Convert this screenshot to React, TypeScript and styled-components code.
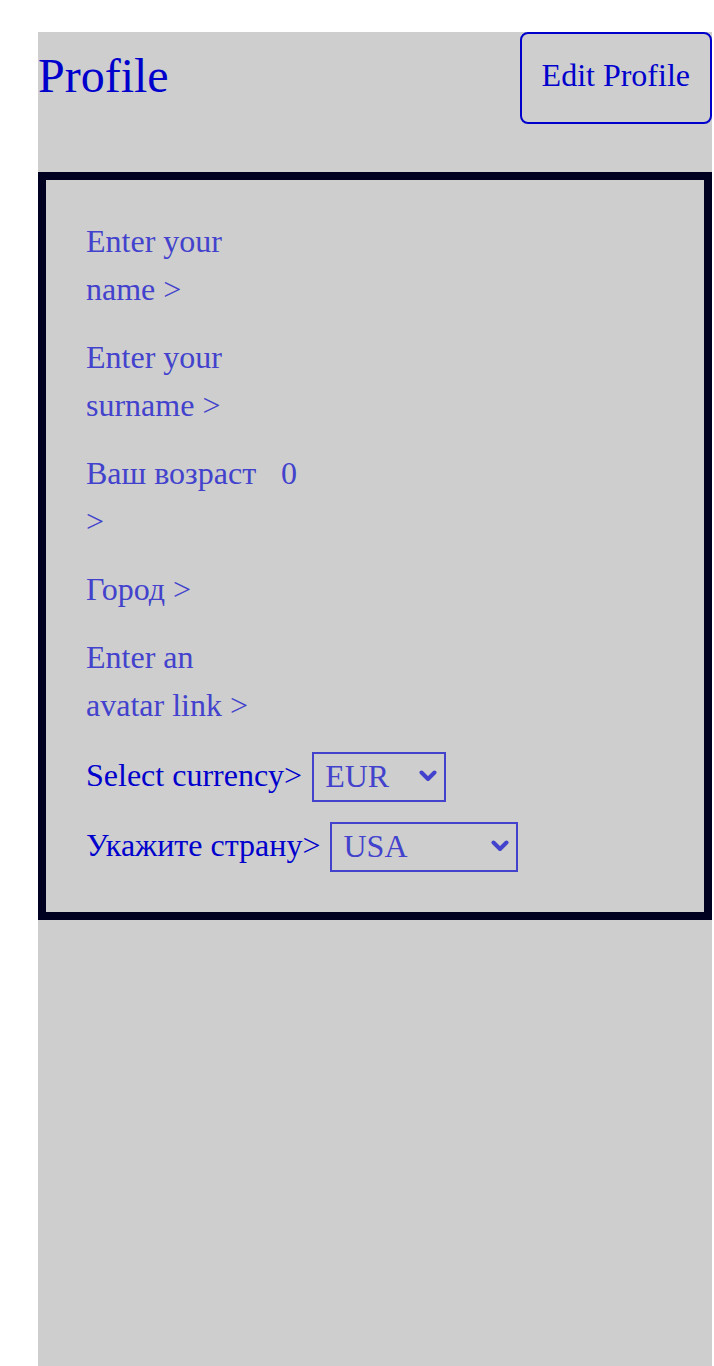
import React from "react";
import styled, { createGlobalStyle } from "styled-components";

const Global = createGlobalStyle`
  html, body { margin: 0; padding: 0; background: #ffffff; }
  body { font-family: "Liberation Serif", "Times New Roman", serif; }
`;

const Page = styled.div`
  padding: 32px 2px 0 38px;
`;

const Container = styled.main`
  background: #cecece;
  min-height: calc(100vh - 32px);
  display: flex;
  flex-direction: column;
  gap: 48px;
`;

const Header = styled.header`
  display: flex;
  align-items: center;
  justify-content: space-between;
`;

const Title = styled.h1`
  margin: 0 0 6px;
  font-size: 48px;
  font-weight: 400;
  color: #0000cd;
`;

const EditButton = styled.button`
  height: 92px;
  padding: 0 20px 6px;
  border: 2px solid #0000cd;
  border-radius: 8px;
  background: transparent;
  font-family: "Liberation Serif", "Times New Roman", serif;
  font-size: 32px;
  color: #0000cd;
`;

const Panel = styled.section`
  border: 8px solid #000020;
  padding: 37px 40px 40px;
  display: flex;
  flex-direction: column;
  gap: 20px;
`;

const Field = styled.div`
  font-size: 32px;
  line-height: 48px;
  color: rgb(66, 66, 205);
`;

const Value = styled.span`
  display: inline-block;
  margin-left: 25px;
`;

const SelectGroup = styled.div`
  margin-top: 3px;
  display: flex;
  flex-direction: column;
  gap: 20px;
`;

const SelectRow = styled.label`
  display: flex;
  align-items: center;
  gap: 10px;
  font-size: 32px;
  color: #0000cd;
`;

const RowLabel = styled.span`
  margin-bottom: 4px;
`;

const SelectBox = styled.span<{ $w: number }>`
  position: relative;
  display: inline-flex;
  width: ${(p) => p.$w}px;
`;

const Select = styled.select`
  appearance: none;
  -webkit-appearance: none;
  width: 100%;
  height: 50px;
  padding: 0 30px 2px 11px;
  border: 2px solid rgb(66, 66, 205);
  border-radius: 0;
  background: transparent;
  color: rgb(66, 66, 205);
  font-family: "Liberation Serif", "Times New Roman", serif;
  font-size: 32px;
  outline: none;
`;

const Chevron = styled.svg`
  position: absolute;
  right: 9px;
  top: 18px;
  width: 18px;
  height: 12px;
  pointer-events: none;
`;

function Dropdown({ width, value, options }: { width: number; value: string; options: string[] }) {
  return (
    <SelectBox $w={width}>
      <Select defaultValue={value}>
        {options.map((o) => (
          <option key={o}>{o}</option>
        ))}
      </Select>
      <Chevron viewBox="0 0 18 12" aria-hidden="true">
        <path
          d="M2.5 2.5 L9 9 L15.5 2.5"
          fill="none"
          stroke="rgb(66, 66, 205)"
          strokeWidth="4"
          strokeLinecap="round"
          strokeLinejoin="round"
        />
      </Chevron>
    </SelectBox>
  );
}

export default function App() {
  return (
    <>
      <Global />
      <Page>
        <Container>
          <Header>
            <Title>Profile</Title>
            <EditButton>Edit Profile</EditButton>
          </Header>
          <Panel>
            <Field>
              Enter your
              <br />
              name &gt;
            </Field>
            <Field>
              Enter your
              <br />
              surname &gt;
            </Field>
            <Field>
              Ваш возраст<Value>0</Value>
              <br />
              &gt;
            </Field>
            <Field>Город &gt;</Field>
            <Field>
              Enter an
              <br />
              avatar link &gt;
            </Field>
            <SelectGroup>
              <SelectRow>
                <RowLabel>Select currency&gt;</RowLabel>
                <Dropdown width={134} value="EUR" options={["EUR", "USD", "RUB"]} />
              </SelectRow>
              <SelectRow>
                <RowLabel>Укажите страну&gt;</RowLabel>
                <Dropdown width={188} value="USA" options={["USA", "Russia", "Germany"]} />
              </SelectRow>
            </SelectGroup>
          </Panel>
        </Container>
      </Page>
    </>
  );
}
